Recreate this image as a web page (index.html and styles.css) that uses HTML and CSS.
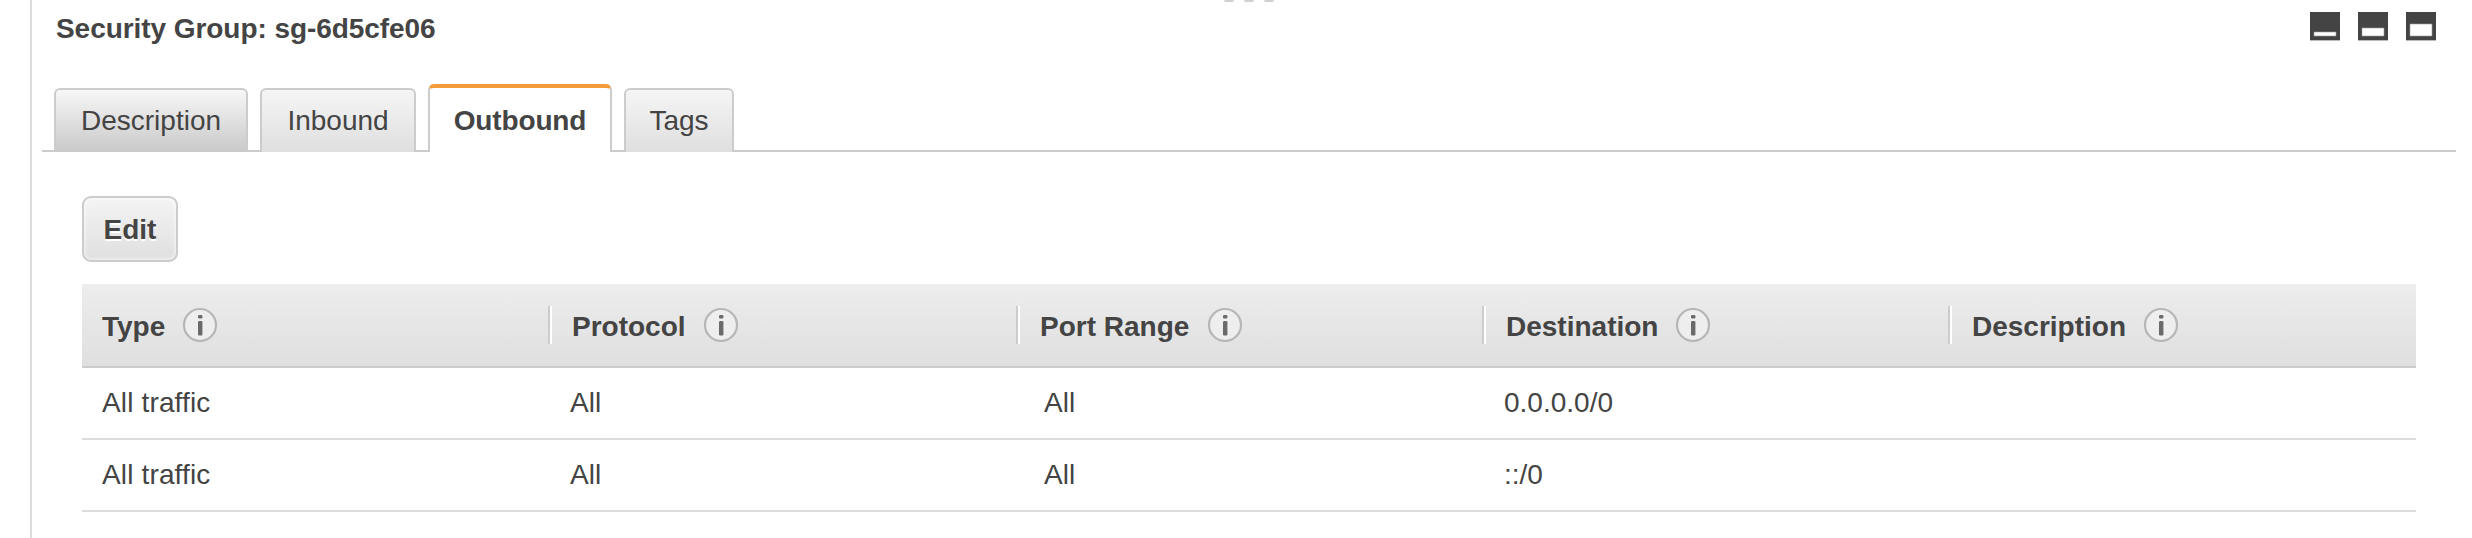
FILE: index.html
```html
<!DOCTYPE html>
<html lang="en">
<head>
<meta charset="utf-8">
<title>Security Group</title>
<link rel="stylesheet" href="styles.css">
</head>
<body>
<svg class="defs" width="0" height="0">
  <symbol id="info" viewBox="0 0 36 36">
    <circle cx="18" cy="18" r="16" fill="#eee" stroke="#b6b6b6" stroke-width="2.2"/>
    <rect x="16" y="8" width="4.4" height="3.4" rx="1.2" fill="#6a6a6a"/>
    <rect x="16" y="14" width="4.4" height="14.5" rx="1.2" fill="#6a6a6a"/>
  </symbol>
</svg>
<main class="panel">
  <div class="grip"><i></i><i></i><i></i></div>
  <header class="bar">
    <h1 class="title">Security Group: sg-6d5cfe06</h1>
    <div class="sizes">
      <svg width="30" height="30"><path d="M0 0h30v28H0z" fill="#444"/><path d="M0 28h30v1H0z" fill="#bbb"/><rect x="4" y="20" width="22" height="4" fill="#fff" stroke="#999" stroke-width=".6"/></svg>
      <svg width="30" height="30"><path d="M0 0h30v28H0z" fill="#444"/><path d="M0 28h30v1H0z" fill="#bbb"/><rect x="4" y="16" width="22" height="8" fill="#fff" stroke="#999" stroke-width=".6"/></svg>
      <svg width="30" height="30"><path d="M0 0h30v28H0z" fill="#444"/><path d="M0 28h30v1H0z" fill="#bbb"/><rect x="4" y="12" width="22" height="12" fill="#fff" stroke="#999" stroke-width=".6"/></svg>
    </div>
  </header>
  <nav class="tabs">
    <a class="tab tab-description">Description</a>
    <a class="tab tab-inbound">Inbound</a>
    <a class="tab tab-outbound">Outbound</a>
    <a class="tab tab-tags">Tags</a>
  </nav>
  <section class="content">
    <button class="edit">Edit</button>
    <div class="row head">
      <div class="th"><span>Type</span><svg class="info"><use href="#info"/></svg></div>
      <div class="th"><span>Protocol</span><svg class="info"><use href="#info"/></svg></div>
      <div class="th th-port"><span>Port Range</span><svg class="info"><use href="#info"/></svg></div>
      <div class="th"><span>Destination</span><svg class="info"><use href="#info"/></svg></div>
      <div class="th"><span>Description</span><svg class="info"><use href="#info"/></svg></div>
    </div>
    <div class="row"><div class="td traffic">All traffic</div><div class="td">All</div><div class="td port">All</div><div class="td">0.0.0.0/0</div><div class="td"></div></div>
    <div class="row"><div class="td traffic">All traffic</div><div class="td">All</div><div class="td port">All</div><div class="td">::/0</div><div class="td"></div></div>
  </section>
</main>
</body>
</html>
```
FILE: styles.css
```css
* { box-sizing: border-box; }
body {
  margin: 0;
  background: #fff;
  color: #444;
  font: 28px/32px "Liberation Sans", Arial, sans-serif;
  overflow: hidden;
}
.defs { display: block; }
.panel {
  height: 538px;
  margin-left: 30px;
  border-left: 2px solid #ddd;
}
.grip {
  display: flex;
  gap: 10px;
  height: 2px;
  padding-left: 1192px;
}
.grip i {
  width: 10px;
  height: 2px;
  background: #d0d0d0;
  border-radius: 0 0 2px 2px;
}
.bar {
  display: flex;
  justify-content: space-between;
  height: 82px;
  padding: 10px 36px 0 24px;
}
.title {
  margin: 0;
  padding-top: 1px;
  font-size: 28px;
  line-height: 32px;
  letter-spacing: -0.06px;
  white-space: nowrap;
}
.sizes { display: flex; gap: 18px; }
.tabs {
  display: flex;
  align-items: flex-end;
  gap: 12px;
  height: 68px;
  margin: 0 16px 0 10px;
  padding-left: 12px;
  background: linear-gradient(#ccc, #ccc) bottom / 100% 2px no-repeat;
}
.tab {
  height: 64px;
  padding-top: 15px;
  border: 2px solid #ccc;
  border-bottom: 0;
  border-radius: 6px 6px 0 0;
  background: linear-gradient(#f5f5f5, #dfdfdf);
  text-align: center;
  white-space: nowrap;
}
.tab-description { width: 194px; background: linear-gradient(#f7f7f7, #c9c9c9); }
.tab-inbound { width: 156px; }
.tab-outbound {
  width: 184px;
  height: 68px;
  padding-top: 17px;
  border-top: 4px solid #f29b38;
  background: #fff;
  font-weight: bold;
  letter-spacing: -0.15px;
}
.tab-tags { width: 110px; }
.content {
  width: 2334px;
  margin: 44px 0 0 50px;
}
.edit {
  display: block;
  width: 96px;
  height: 66px;
  padding: 2px 0 0;
  border: 2px solid #ccc;
  border-radius: 9px;
  background: linear-gradient(#f4f4f4, #dfdfdf);
  box-shadow: inset 0 0 4px #fff;
  color: #444;
  font: bold 28px/32px "Liberation Sans", Arial, sans-serif;
  text-shadow: 0 2px 0 #fff;
}
.row {
  display: grid;
  grid-template-columns: 466px 468px 466px 466px 468px;
  height: 72px;
  border-bottom: 2px solid #ddd;
}
.head {
  height: 84px;
  margin-top: 22px;
  border-bottom-color: #ccc;
  background: linear-gradient(#ededed, #dfdfdf);
  font-weight: bold;
}
.th {
  display: flex;
  align-items: flex-start;
  gap: 17px;
  padding: 24px 0 0 24px;
  background:
    linear-gradient(#ccc, #ccc) 0 22px / 2px 38px no-repeat,
    linear-gradient(#fff, #fff) 2px 22px / 2px 38px no-repeat;
}
.th:first-child { padding-left: 20px; background: none; }
.th-port { gap: 18px; }
.th span { padding-top: 3px; white-space: nowrap; }
.info { width: 36px; height: 36px; margin-top: -1px; }
.td { padding: 19px 0 0 22px; white-space: nowrap; }
.td:first-child { padding-left: 20px; }
.td.traffic { letter-spacing: 0.15px; }
.td.port { padding-left: 28px; }
```
